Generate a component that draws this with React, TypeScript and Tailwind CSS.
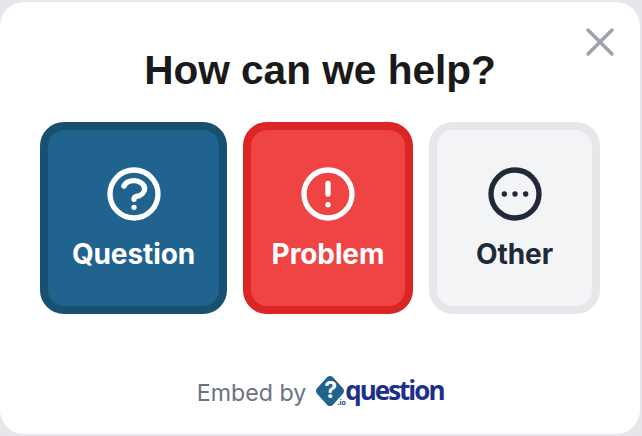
import type { ReactNode } from "react";

function CircleIcon({ d }: { d: string }) {
  return (
    <svg width="64" height="64" viewBox="0 0 24 24" fill="none" stroke="currentColor" strokeWidth="2" strokeLinecap="round" strokeLinejoin="round">
      <path d={d} />
    </svg>
  );
}

function ChoiceButton({ icon, label, className }: { icon: ReactNode; label: string; className: string }) {
  return (
    <button className={`flex h-[192px] flex-col items-center rounded-3xl border-8 pt-[32px] ${className}`}>
      {icon}
      <span className="mt-[10px] text-[28px] leading-[36px] font-bold tracking-[-0.1px]">{label}</span>
    </button>
  );
}

function Logo() {
  return (
    <div className="relative h-[36px] w-[128px]">
      <svg width="30" height="32" viewBox="0 0 30 32" className="absolute top-[0px] left-0">
        <path d="M12.5 1.8 Q15 0 17.5 1.8 L28.2 13.5 Q30 16 28.2 18.5 L17.5 30.2 Q15 32 12.5 30.2 L1.8 18.5 Q0 16 1.8 13.5 Z" fill="#1f638e" />
      </svg>
      <span className="absolute top-[4px] left-[9px] text-[23px] leading-[23px] font-bold text-white">?</span>
      <span className="absolute top-[24px] left-[22px] text-[7px] leading-[7px] font-bold text-[#1e3a8a]">.io</span>
      <span className="absolute top-[-2px] left-[30px] font-['Open_Sans',sans-serif] text-[26px] leading-[34px] font-bold tracking-[-2px] text-[#1e2f8a]">
        question
      </span>
    </div>
  );
}

export default function App() {
  return (
    <div className="h-[436px] w-[642px] bg-[#e5e7eb] pt-[2px] font-['Inter',sans-serif]">
      <div className="relative h-[432px] w-[640px] rounded-3xl bg-white px-10">
        <button className="absolute top-[24px] right-[24px] text-[#9ca3af]">
          <svg width="32" height="32" viewBox="0 0 32 32" fill="none" stroke="currentColor" strokeWidth="3.5" strokeLinecap="round">
            <path d="M4 4 L28 28 M28 4 L4 28" />
          </svg>
        </button>
        <h1 className="pt-[42px] text-center font-['Liberation_Sans',sans-serif] text-[40.6px] leading-[52px] font-bold text-[#1a1a1a]">
          How can we help?
        </h1>
        <div className="mt-[26px] flex gap-4">
          <ChoiceButton
            className="w-[187px] border-[#18506f] bg-[#1f638e] text-white"
            label="Question"
            icon={<CircleIcon d="M8.228 9c.549-1.165 2.03-2 3.772-2 2.21 0 4 1.343 4 3 0 1.4-1.278 2.575-3.006 2.907-.542.104-.994.54-.994 1.093m0 3h.01M21 12a9 9 0 11-18 0 9 9 0 0118 0z" />}
          />
          <ChoiceButton
            className="w-[170px] border-[#dc2626] bg-[#ef4444] text-white"
            label="Problem"
            icon={<CircleIcon d="M12 8v4m0 4h.01M21 12a9 9 0 11-18 0 9 9 0 0118 0z" />}
          />
          <ChoiceButton
            className="w-[171px] border-[#e5e7eb] bg-[#f3f4f6] text-[#1f2937]"
            label="Other"
            icon={<CircleIcon d="M8 12h.01M12 12h.01M16 12h.01M21 12a9 9 0 11-18 0 9 9 0 0118 0z" />}
          />
        </div>
        <div className="mt-[61px] flex items-center justify-center gap-[9px]">
          <span className="text-[23.2px] leading-[36px] text-[#6b7280]">Embed by</span>
          <Logo />
        </div>
      </div>
    </div>
  );
}
